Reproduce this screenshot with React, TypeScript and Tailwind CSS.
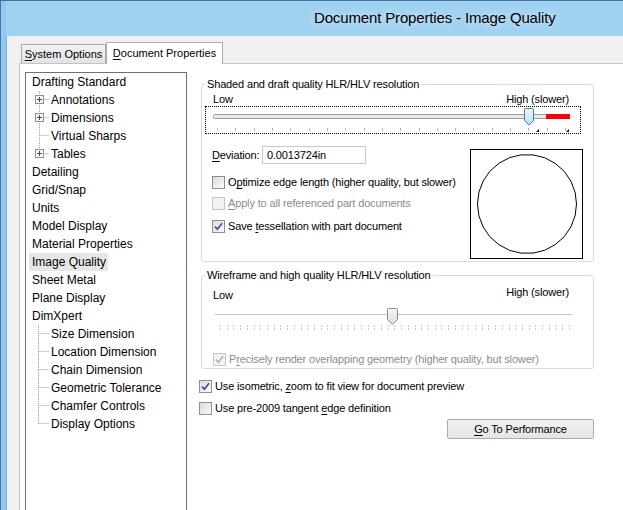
import React from "react";

type TreeRow = {
  label: string;
  group?: 1 | 2;
  plus?: boolean;
  pos?: "first" | "mid" | "last";
  selected?: boolean;
};

const tree: TreeRow[] = [
  { label: "Drafting Standard" },
  { label: "Annotations", group: 1, plus: true, pos: "first" },
  { label: "Dimensions", group: 1, plus: true, pos: "mid" },
  { label: "Virtual Sharps", group: 1, pos: "mid" },
  { label: "Tables", group: 1, plus: true, pos: "last" },
  { label: "Detailing" },
  { label: "Grid/Snap" },
  { label: "Units" },
  { label: "Model Display" },
  { label: "Material Properties" },
  { label: "Image Quality", selected: true },
  { label: "Sheet Metal" },
  { label: "Plane Display" },
  { label: "DimXpert" },
  { label: "Size Dimension", group: 2, pos: "first" },
  { label: "Location Dimension", group: 2, pos: "mid" },
  { label: "Chain Dimension", group: 2, pos: "mid" },
  { label: "Geometric Tolerance", group: 2, pos: "mid" },
  { label: "Chamfer Controls", group: 2, pos: "mid" },
  { label: "Display Options", group: 2, pos: "last" },
];

const U = ({ c }: { c: string }) => <span className="underline underline-offset-[2px]">{c}</span>;

const Connector = ({ row }: { row: TreeRow }) => {
  const x = row.group === 1 ? 13.5 : 12.5;
  const vEnd = row.pos === "last" ? 9 : 18;
  return (
    <svg width="25" height="18" className="block shrink-0">
      <line x1={x} y1="0" x2={x} y2={vEnd} stroke="#9a9a9a" strokeDasharray="1 1" />
      <line x1={x + 1} y1="8.5" x2="23" y2="8.5" stroke="#9a9a9a" strokeDasharray="1 1" />
      {row.plus && (
        <g>
          <rect x="9.5" y="4.5" width="8" height="8" fill="#f7f7f7" stroke="#8f8f8f" />
          <line x1="11" y1="8.5" x2="16" y2="8.5" stroke="#2e4f8f" />
          <line x1="13.5" y1="6" x2="13.5" y2="11" stroke="#2e4f8f" />
        </g>
      )}
    </svg>
  );
};

const CheckBox = ({ checked, disabled }: { checked?: boolean; disabled?: boolean }) => (
  <span
    className={
      disabled
        ? "flex h-[13px] w-[13px] shrink-0 items-center justify-center border border-[#c5c5c5] bg-[#f3f3f3]"
        : "flex h-[13px] w-[13px] shrink-0 items-center justify-center border border-[#8e8f8f] bg-gradient-to-br from-[#dcdcdc] to-[#fbfbfb]"
    }
  >
    {checked && (
      <svg width="9" height="9" viewBox="0 0 9 9" className="block">
        <path
          d="M1 4.6 L3.4 7.2 L8 1.2"
          fill="none"
          stroke={disabled ? "#b4b4b4" : "#3c5592"}
          strokeWidth="1.7"
        />
      </svg>
    )}
  </span>
);

const CheckRow = ({
  checked,
  disabled,
  children,
  className,
}: {
  checked?: boolean;
  disabled?: boolean;
  children: React.ReactNode;
  className?: string;
}) => (
  <div className={`flex h-[16px] items-center gap-[3px] ${className ?? ""}`}>
    <CheckBox checked={checked} disabled={disabled} />
    <span className={disabled ? "text-[#8c8c8c]" : ""}>{children}</span>
  </div>
);

const ShadedSlider = () => {
  const ticks = Array.from({ length: 20 }, (_, i) => Math.round(11 + i * 18.32) + 0.5);
  return (
    <div className="h-[28px] w-full border border-dotted border-black">
      <svg width="373" height="26" className="block">
        <defs>
          <linearGradient id="thumbBlue" x1="0" y1="0" x2="0" y2="1">
            <stop offset="0" stopColor="#eef8fd" />
            <stop offset="1" stopColor="#b9def4" />
          </linearGradient>
        </defs>
        <rect x="7.5" y="7.5" width="356" height="4" rx="1" fill="#e8eaea" stroke="#9f9f9f" />
        <rect x="340" y="7" width="24" height="5" fill="#ff0000" />
        {ticks.map((t) => (
          <line key={t} x1={t} y1="21" x2={t} y2="24" stroke="#b8b8b8" />
        ))}
        <path d="M330 25 L333 25 L333 22 Z" fill="#111" />
        <path d="M360 25 L363 25 L363 22 Z" fill="#111" />
        <path
          d="M318.5 2.5 a1 1 0 0 1 1 -1 h7 a1 1 0 0 1 1 1 v11 l-4.5 4.5 l-4.5 -4.5 z"
          fill="url(#thumbBlue)"
          stroke="#3c7fb1"
        />
      </svg>
    </div>
  );
};

const WireSlider = () => {
  const ticks = Array.from({ length: 53 }, (_, i) => Math.round(15 + i * 6.71) + 0.5);
  return (
    <svg width="376" height="27" className="block">
      <defs>
        <linearGradient id="thumbGrey" x1="0" y1="0" x2="0" y2="1">
          <stop offset="0" stopColor="#f6f6f6" />
          <stop offset="1" stopColor="#dedede" />
        </linearGradient>
      </defs>
      <line x1="10" y1="9.5" x2="367" y2="9.5" stroke="#c4c4c4" />
      {ticks.map((t) => (
        <line key={t} x1={t} y1="20" x2={t} y2="25" stroke="#c8c8c8" strokeDasharray="2 1" />
      ))}
      <path
        d="M182.5 4.5 a1 1 0 0 1 1 -1 h8 a1 1 0 0 1 1 1 v10 l-5 5 l-5 -5 z"
        fill="url(#thumbGrey)"
        stroke="#8d8d8d"
      />
    </svg>
  );
};

const Preview = () => {
  const pts = Array.from({ length: 26 }, (_, i) => {
    const a = (i / 26) * Math.PI * 2;
    return `${(56 + 49.5 * Math.cos(a)).toFixed(1)},${(54 + 49.5 * Math.sin(a)).toFixed(1)}`;
  }).join(" ");
  return (
    <div className="mr-[-2px] ml-auto mt-[3px] h-[110px] w-[113px] border border-black bg-white">
      <svg width="111" height="108" className="block">
        <polygon points={pts} fill="none" stroke="#000" />
      </svg>
    </div>
  );
};

export default function App() {
  return (
    <div className="flex h-[510px] w-[623px] overflow-hidden border-t border-[#41739b] bg-[#9fd1f1] font-['Liberation_Sans',Arial,sans-serif] text-black">
      <div className="w-[6px] shrink-0 border-l border-[#3f78a8] bg-[#92c8ec]" />
      <div className="flex min-w-0 flex-1 flex-col">
        <div className="flex h-[35px] shrink-0 items-center pl-[308px]">
          <span className="text-[15px] tracking-[-0.15px] [text-shadow:0_0_8px_rgba(255,255,255,0.9)]">
            Document Properties - Image Quality
          </span>
        </div>
        <div className="flex flex-1 flex-col border-l border-[#86b5d8] bg-[#f0f0f0] pl-[12px]">
          <div className="relative z-10 mt-[6px] flex h-[21px] items-end pl-[2px] text-[11px]">
            <div className="flex h-[19px] w-[85px] items-center justify-center border border-b-0 border-[#acacac] bg-gradient-to-b from-[#f2f2f2] to-[#e3e3e3]">
              <span>
                <U c="S" />
                ystem Options
              </span>
            </div>
            <div className="mb-[-1px] flex h-[22px] w-[117px] items-center justify-center border border-b-0 border-[#acacac] bg-white pb-[1px]">
              <span>
                <U c="D" />
                ocument Properties
              </span>
            </div>
          </div>
          <div className="flex flex-1 items-start border-t border-l border-[#c3c3c3] bg-white">
            <div className="ml-[5px] mt-[8px] h-[460px] w-[162px] shrink-0 border border-[#707070] text-[12px] leading-[16px]">
              {tree.map((row) =>
                row.group ? (
                  <div key={row.label} className="flex h-[18px] items-center">
                    <Connector row={row} />
                    <span>{row.label}</span>
                  </div>
                ) : (
                  <div key={row.label} className="flex h-[18px] items-stretch">
                    <span
                      className={
                        row.selected
                          ? "ml-[3px] flex items-center bg-[#e6e6e6] pl-[3px] pr-[2px]"
                          : "ml-[3px] flex items-center pl-[3px] pr-[2px]"
                      }
                    >
                      {row.label}
                    </span>
                  </div>
                )
              )}
            </div>

            <div className="ml-[12px] mt-[13px] flex w-[395px] shrink-0 flex-col text-[11px] leading-[14px] tracking-[-0.15px]">
              <fieldset className="ml-[2px] rounded-[3px] border border-[#d6dde2] pb-[2px] pl-[3px] pr-[12px]">
                <legend className="px-[2px]">Shaded and draft quality HLR/HLV resolution</legend>
                <div className="mt-[1px] flex h-[14px] justify-between pl-[8px] pr-[12px]">
                  <span>Low</span>
                  <span>High (slower)</span>
                </div>
                <ShadedSlider />
                <div className="mt-[12px] flex items-start">
                  <div className="ml-[7px] flex flex-col">
                    <div className="flex h-[18px] items-center">
                      <span className="w-[50px] shrink-0">
                        <U c="D" />
                        eviation:
                      </span>
                      <div className="flex h-[18px] w-[104px] items-center border border-[#c9c9c9] pl-[4px]">
                        0.0013724in
                      </div>
                    </div>
                    <CheckRow className="mt-[10px]">
                      O<U c="p" />
                      timize edge length (higher quality, but slower)
                    </CheckRow>
                    <CheckRow disabled className="mt-[5px]">
                      <U c="A" />
                      pply to all referenced part documents
                    </CheckRow>
                    <CheckRow checked className="mt-[7px]">
                      Save <U c="t" />
                      essellation with part document
                    </CheckRow>
                  </div>
                  <Preview />
                </div>
              </fieldset>

              <fieldset className="ml-[2px] mt-[6px] rounded-[3px] border border-[#d6dde2] pb-[1px] pl-[3px] pr-[12px]">
                <legend className="px-[2px]">Wireframe and high quality HLR/HLV resolution</legend>
                <div className="mt-[3px] flex h-[17px] items-start justify-between pl-[8px] pr-[12px]">
                  <span className="mt-[3px]">Low</span>
                  <span>High (slower)</span>
                </div>
                <div className="mt-[3px]">
                  <WireSlider />
                </div>
                <CheckRow checked disabled className="ml-[8px] mt-[19px]">
                  P<U c="r" />
                  ecisely render overlapping geometry (higher quality, but slower)
                </CheckRow>
              </fieldset>

              <CheckRow checked className="mt-[9px]">
                Use isometric, <U c="z" />
                oom to fit view for document preview
              </CheckRow>
              <CheckRow className="mt-[6px]">
                Use pre-2009 tangent <U c="e" />
                dge definition
              </CheckRow>
              <div className="mt-[3px] flex justify-end">
                <button className="h-[20px] w-[147px] rounded-[2px] border border-[#acacac] bg-gradient-to-b from-[#f0f0f0] to-[#e5e5e5] text-[11px]">
                  <U c="G" />o To Performance
                </button>
              </div>
            </div>
          </div>
        </div>
      </div>
    </div>
  );
}
